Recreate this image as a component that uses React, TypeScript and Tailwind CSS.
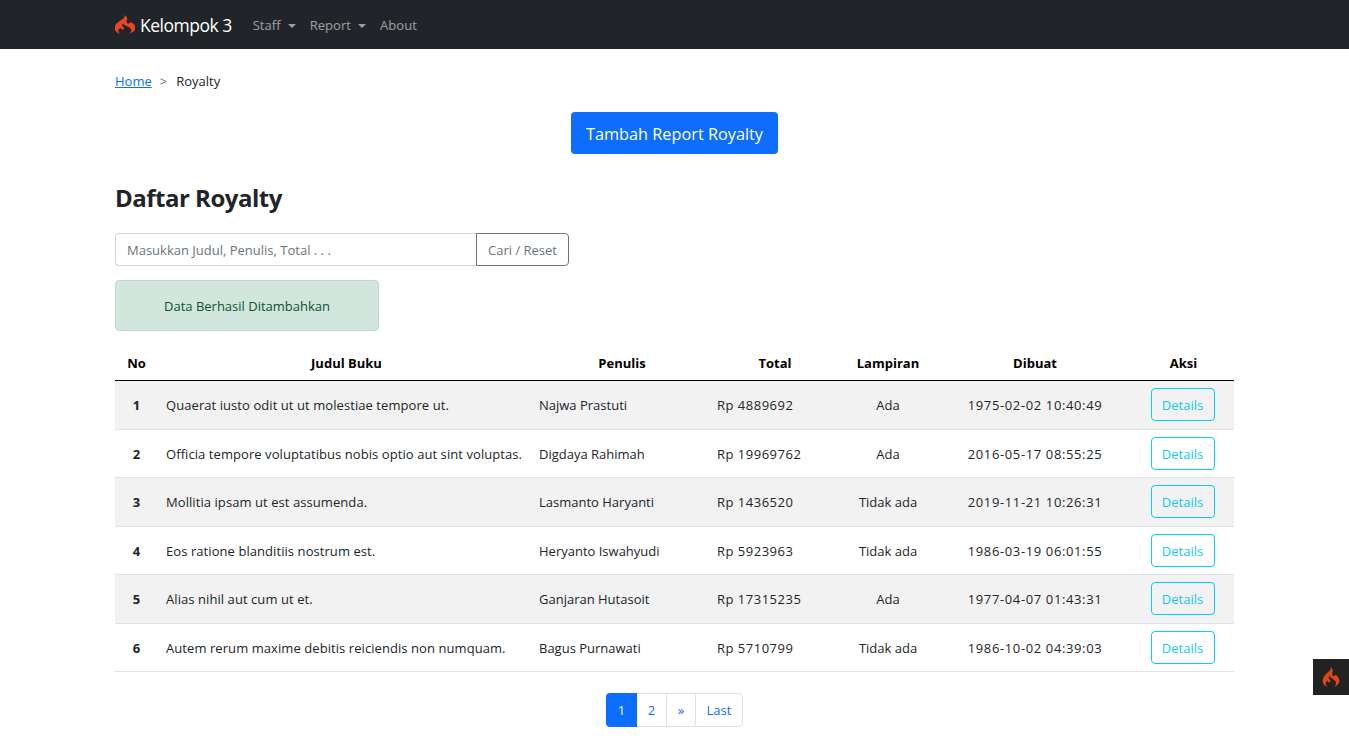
import { SiCodeigniter } from "react-icons/si";

const ROWS = [
  { no: 1, judul: "Quaerat iusto odit ut ut molestiae tempore ut.", penulis: "Najwa Prastuti", total: "Rp 4889692", lampiran: "Ada", dibuat: "1975-02-02 10:40:49" },
  { no: 2, judul: "Officia tempore voluptatibus nobis optio aut sint voluptas.", penulis: "Digdaya Rahimah", total: "Rp 19969762", lampiran: "Ada", dibuat: "2016-05-17 08:55:25" },
  { no: 3, judul: "Mollitia ipsam ut est assumenda.", penulis: "Lasmanto Haryanti", total: "Rp 1436520", lampiran: "Tidak ada", dibuat: "2019-11-21 10:26:31" },
  { no: 4, judul: "Eos ratione blanditiis nostrum est.", penulis: "Heryanto Iswahyudi", total: "Rp 5923963", lampiran: "Tidak ada", dibuat: "1986-03-19 06:01:55" },
  { no: 5, judul: "Alias nihil aut cum ut et.", penulis: "Ganjaran Hutasoit", total: "Rp 17315235", lampiran: "Ada", dibuat: "1977-04-07 01:43:31" },
  { no: 6, judul: "Autem rerum maxime debitis reiciendis non numquam.", penulis: "Bagus Purnawati", total: "Rp 5710799", lampiran: "Tidak ada", dibuat: "1986-10-02 04:39:03" },
];

function Caret() {
  return <span className="ml-[7px] inline-block h-0 w-0 border-x-[4px] border-t-[4px] border-x-transparent border-t-current align-middle" />;
}

export default function App() {
  return (
    <div className="min-h-[741px] bg-white font-['Open_Sans',sans-serif] text-[13px] text-[#212529]">
      {/* navbar */}
      <nav className="h-[49px] bg-[#212529]">
        <div className="mx-auto flex h-full w-[1119px] items-center">
          <SiCodeigniter viewBox="2.5 0 19 24" preserveAspectRatio="none" className="h-[19px] w-[20px] text-[#ee4323]" />
          <span className="ml-[5px] pt-[2px] text-[17.5px] tracking-[-0.5px] text-white">Kelompok 3</span>
          <div className="ml-[21px] flex gap-[14px] pt-[2px] text-[13px] tracking-[0.05px] text-white/55">
            <span>Staff<Caret /></span>
            <span>Report<Caret /></span>
            <span>About</span>
          </div>
        </div>
      </nav>

      <main className="mx-auto w-[1119px]">
        {/* breadcrumb */}
        <div className="mt-[23px] flex h-[20px] items-center gap-[8px]">
          <a className="text-[#0d6efd] underline">Home</a>
          <span className="text-[#6c757d]">&gt;</span>
          <span className="ml-[1px]">Royalty</span>
        </div>

        <div className="mt-[20px] flex justify-center">
          <button className="h-[42px] w-[207px] rounded-[4px] bg-[#0d6efd] pt-[2px] text-[16.3px] text-white">Tambah Report Royalty</button>
        </div>

        <h1 className="mt-[27px] text-[24px] leading-[34px] font-bold tracking-[-0.5px]">Daftar Royalty</h1>

        {/* search */}
        <div className="mt-[18px] flex h-[33px] w-[454px]">
          <div className="flex flex-1 items-center rounded-l-[4px] border border-r-0 border-[#ced4da] pt-[2px] pl-[11px] text-[#6c757d]">Masukkan Judul, Penulis, Total . . .</div>
          <button className="w-[93px] rounded-r-[4px] border border-[#6c757d] pt-[2px] text-[#6c757d]">Cari / Reset</button>
        </div>

        <div className="mt-[14px] flex h-[51px] w-[264px] items-center justify-center rounded-[4px] border border-[#badbcc] bg-[#d1e7dd] pt-[2px] text-[#0f5132]">Data Berhasil Ditambahkan</div>

        {/* table */}
        <table className="mt-[16px] w-full table-fixed border-collapse">
          <colgroup>
            <col className="w-[43px]" />
            <col className="w-[373px]" />
            <col className="w-[178px]" />
            <col className="w-[130px]" />
            <col className="w-[98px]" />
            <col className="w-[196px]" />
            <col />
          </colgroup>
          <thead>
            <tr className="h-[33.5px] border-b border-black text-black">
              <th>No</th>
              <th className="pl-1">Judul Buku</th>
              <th className="pl-1">Penulis</th>
              <th className="pl-[2px]">Total</th>
              <th>Lampiran</th>
              <th>Dibuat</th>
              <th>Aksi</th>
            </tr>
          </thead>
          <tbody>
            {ROWS.map((r) => (
              <tr key={r.no} className="h-[48.5px] border-b border-[#dee2e6] odd:bg-[#f2f2f2] even:bg-white">
                <td className="pt-[2px] text-center font-bold">{r.no}</td>
                <td className="px-2 pt-[2px] tracking-[0.07px] whitespace-nowrap">{r.judul}</td>
                <td className="px-2 pt-[2px] whitespace-nowrap">{r.penulis}</td>
                <td className="px-2 pt-[2px] tracking-[0.5px] whitespace-nowrap">{r.total}</td>
                <td className="pt-[2px] text-center">{r.lampiran}</td>
                <td className="pt-[2px] text-center tracking-[0.63px]">{r.dibuat}</td>
                <td className="pr-[2px] text-center">
                  <button className="h-[33px] w-[64px] rounded-[4px] border border-[#0dcaf0] pt-[2px] text-[#0dcaf0]">Details</button>
                </td>
              </tr>
            ))}
          </tbody>
        </table>

        {/* pagination */}
        <div className="mt-[21px] flex justify-center">
          <div className="flex h-[34px] text-[#0d6efd]">
            <span className="flex w-[31px] items-center justify-center rounded-l-[4px] bg-[#0d6efd] pt-[1px] text-white">1</span>
            <span className="flex w-[29px] items-center justify-center border-y border-[#dee2e6] pt-[1px]">2</span>
            <span className="flex w-[29px] items-center justify-center border-y border-l border-[#dee2e6] pt-[1px]">»</span>
            <span className="flex w-[48px] items-center justify-center rounded-r-[4px] border border-[#dee2e6] pt-[1px]">Last</span>
          </div>
        </div>
      </main>

      {/* debug toolbar */}
      <div className="fixed top-[659px] right-0 flex h-[36px] w-[36px] items-center justify-center bg-[#222]">
        <SiCodeigniter className="h-[20px] w-[20px] text-[#dd4814]" />
      </div>
    </div>
  );
}
